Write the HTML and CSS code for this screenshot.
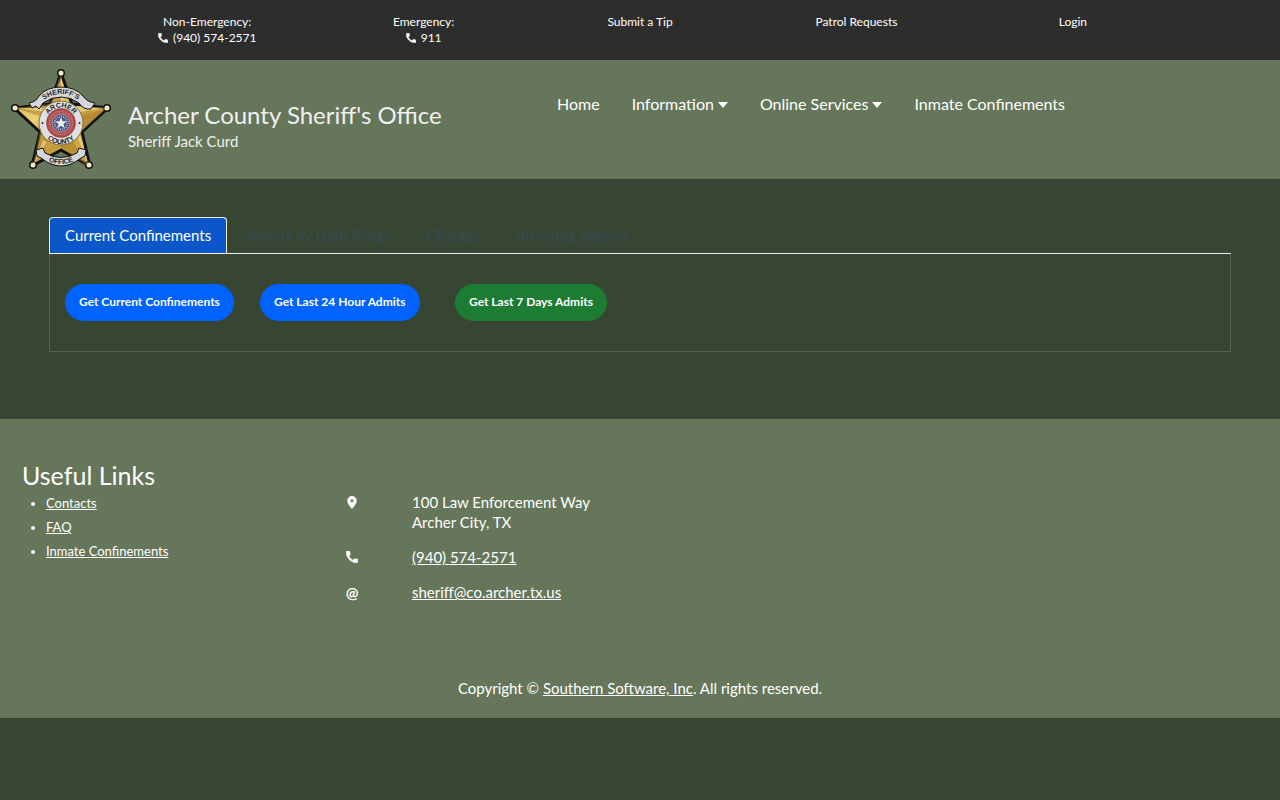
FILE: index.html
```html
<!DOCTYPE html>
<html lang="en">

<head>
    <meta charset="UTF-8">
    <meta name="viewport" content="width=device-width, initial-scale=1.0">
    <title>Archer County Sheriff's Office</title>
    <link rel="stylesheet" href="styles.css">
</head>

<body>
    <svg class="sprite" width="0" height="0" aria-hidden="true">
        <symbol id="icon-phone" viewBox="3 3 18 18">
            <path stroke="currentColor" stroke-width="1" d="M7 10.500c1.440 2.830 3.660 5.040 6.500 6.500l2.200-2.200c.27-.27.67-.36 1.020-.24 1 .37 2.100.57 3.280.57.3 0 .5.25.5.6V19.500c0 .55-.45 1-1 1C10.610 20.500 3.500 13.390 3.500 4.500c0-.55.45-1 1-1h3.500c.55 0 .9.3.9.8 0 1 .2 2.150.57 3.270.11.350.03.74-.25 1.020z" />
        </symbol>
        <symbol id="icon-pin" viewBox="0 0 10 13">
            <path fill-rule="evenodd" d="M5 0a4.700 4.700 0 0 1 4.700 4.700C9.700 7.500 7 10.500 5 13 3 10.500.3 7.500.3 4.700A4.700 4.700 0 0 1 5 0zm0 3.200a1.500 1.500 0 1 0 0 3 1.500 1.500 0 0 0 0-3z" />
        </symbol>
    </svg>

    <div class="topbar">
        <div class="topbar-item">
            Non-Emergency:
            <a href="tel:9405742571"><svg class="icon-small"><use href="#icon-phone" /></svg> (940) 574-2571</a>
        </div>
        <div class="topbar-item">
            Emergency:
            <a href="tel:911"><svg class="icon-small"><use href="#icon-phone" /></svg> 911</a>
        </div>
        <div class="topbar-item"><a href="#">Submit a Tip</a></div>
        <div class="topbar-item"><a href="#">Patrol Requests</a></div>
        <div class="topbar-item"><a href="#">Login</a></div>
    </div>

    <header class="header">
        <a class="brand" href="#">
            <svg class="badge" viewBox="10 8 104 104" role="img" aria-label="Sheriff badge">
                <defs>
                    <linearGradient id="gold" x1="0" y1="0" x2="1" y2="1">
                        <stop offset="0" stop-color="#c9a040" />
                        <stop offset=".35" stop-color="#ecd070" />
                        <stop offset=".6" stop-color="#c59a3c" />
                        <stop offset="1" stop-color="#e3c05a" />
                    </linearGradient>
                    <path id="arc-sheriff" d="M40 44A27 27 0 0 1 82 44" />
                    <path id="arc-archer" d="M45.500 63A15.500 15.500 0 0 1 76.500 63" />
                    <path id="arc-county" d="M40 63A21 21 0 0 0 82 63" />
                    <path id="arc-office" d="M44 99Q61 109 78 99" />
                </defs>
                <!-- star -->
                <g stroke="#111" stroke-width="3" stroke-linejoin="round">
                    <path fill="url(#gold)" d="M61 13 72 44 108 48 82 72 90 106 61 90 32 106 40 72 14 48 50 44z" />
                    <circle cx="61" cy="13" r="2.500" />
                    <circle cx="15" cy="48" r="2.500" />
                    <circle cx="107" cy="48" r="2.500" />
                    <circle cx="33" cy="105" r="2.500" />
                    <circle cx="89" cy="105" r="2.500" />
                </g>
                <path fill="#a87c2c" opacity=".55" d="M61 14 61 63 50 44zM107 48 61 63 82 71zM89 106 61 63 61 88zM33 106 61 63 40 71zM15 48 61 63 50 44z" />
                <path fill="#f7e3a0" opacity=".6" d="M61 14 64 44 61 50zM107 48 80 52 75 46zM15 48 43 48 46 52zM33 106 43 80 47 82zM89 106 78 78 80 74z" />
                <g fill="#f3ead0">
                    <circle cx="61" cy="13" r="2.500" />
                    <circle cx="15" cy="48" r="2.500" />
                    <circle cx="107" cy="48" r="2.500" />
                    <circle cx="33" cy="105" r="2.500" />
                    <circle cx="89" cy="105" r="2.500" />
                </g>
                <!-- ribbons -->
                <g stroke="#111" stroke-width="1">
                    <path fill="#d5d6da" d="M29 43Q36 42 39 36Q47 27 61 27Q75 27 83 36Q87 42 95 43L91 49Q83 50 79 43Q71 37 61 37Q51 37 43 43L39 49 36 46 32 48z" />
                    <path fill="#d5d6da" d="M36 90 43 88 45 93Q61 102 77 93L79 88 86 90 85 96 81 98Q61 114 41 98L37 96z" />
                </g>
                <!-- seal -->
                <circle cx="61" cy="63" r="22" fill="#dedfe2" stroke="#8a6a2c" />
                <circle cx="61" cy="63" r="14.500" fill="#b04a4a" stroke="#7c2626" stroke-width=".5" />
                <circle cx="61" cy="63" r="11.500" fill="none" stroke="#c98580" stroke-width="1.500" stroke-dasharray="1 1" />
                <circle cx="61" cy="63" r="9" fill="#4a5480" stroke="#ddd" stroke-width=".5" />
                <circle cx="61" cy="63" r="6.500" fill="none" stroke="#a8b0c8" stroke-width="2" stroke-dasharray="1 1" />
                <path fill="#eee" d="m61 57 1.500 4.200 4.500.1-3.600 2.700 1.300 4.300L61 65.700l-3.700 2.600 1.300-4.300L55 61.300l4.500-.1z" />
                <circle cx="42.500" cy="63" r="1" fill="#222" />
                <circle cx="79.500" cy="63" r="1" fill="#222" />
                <g class="badge-text">
                    <text><textPath href="#arc-sheriff" startOffset="50%">SHERIFF'S</textPath></text>
                    <text><textPath href="#arc-archer" startOffset="50%">ARCHER</textPath></text>
                    <text><textPath href="#arc-county" startOffset="50%">COUNTY</textPath></text>
                    <text><textPath href="#arc-office" startOffset="50%">OFFICE</textPath></text>
                </g>
            </svg>
            <span class="brand-text">
                <span class="brand-title">Archer County Sheriff's Office</span>
                <span class="brand-subtitle">Sheriff Jack Curd</span>
            </span>
        </a>
        <nav class="nav">
            <a href="#">Home</a>
            <a href="#" class="dropdown">Information</a>
            <a href="#" class="dropdown">Online Services</a>
            <a href="#">Inmate Confinements</a>
        </nav>
    </header>

    <main class="main">
        <div class="tabs" role="tablist">
            <button class="tab active" role="tab" aria-selected="true">Current Confinements</button>
            <button class="tab" role="tab">Admits by Date Range</button>
            <button class="tab" role="tab">Charges</button>
            <button class="tab" role="tab">Arresting Agency</button>
        </div>
        <div class="tab-panel" role="tabpanel">
            <button class="btn">Get Current Confinements</button>
            <button class="btn">Get Last 24 Hour Admits</button>
            <button class="btn btn-success">Get Last 7 Days Admits</button>
        </div>
    </main>

    <footer class="footer">
        <div class="footer-row">
            <div class="links">
                <h2>Useful Links</h2>
                <ul>
                    <li><a href="#">Contacts</a></li>
                    <li><a href="#">FAQ</a></li>
                    <li><a href="#">Inmate Confinements</a></li>
                </ul>
            </div>
            <address class="contact">
                <svg class="icon-pin"><use href="#icon-pin" /></svg>
                <div>100 Law Enforcement Way<br>Archer City, TX</div>
                <svg class="icon-phone"><use href="#icon-phone" /></svg>
                <a href="tel:9405742571">(940) 574-2571</a>
                <span>@</span>
                <a href="mailto:sheriff@co.archer.tx.us">sheriff@co.archer.tx.us</a>
            </address>
        </div>
        <p class="copyright">Copyright © <a href="#">Southern Software, Inc</a>. All rights reserved.</p>
    </footer>
</body>

</html>
```
FILE: styles.css
```css
* {
    box-sizing: border-box;
}

body {
    margin: 0;
    background-color: #374533;
    color: white;
    font-family: Lato, "Open Sans", sans-serif;
    font-size: 15px;
    line-height: 20px;
}

a {
    color: white;
}

button {
    font-family: inherit;
    cursor: pointer;
}

svg {
    fill: currentColor;
}

.sprite {
    position: absolute;
}

.topbar {
    display: flex;
    min-height: 60px;
    padding: 14px 99px 0;
    background-color: #2d2d2d;
    font-size: 12px;
    line-height: 16px;
    text-align: center;
}

.topbar-item {
    flex: 1;
}

.topbar-item a {
    display: block;
    text-decoration: none;
}

.icon-small {
    width: 10px;
    height: 10px;
    margin-right: 2px;
    vertical-align: -1px;
}

.header {
    display: flex;
    min-height: 119px;
    padding: 8px 10px 7px;
    background-color: #65765a;
}

.brand {
    display: flex;
    flex: 0 0 531px;
    gap: 14px;
    color: #f0f0f0;
    text-decoration: none;
}

.badge {
    width: 104px;
    height: 104px;
}

.badge-text {
    fill: #222;
    font-family: "Liberation Sans", sans-serif;
    font-size: 7px;
    font-weight: bold;
    text-anchor: middle;
}

.brand-text {
    padding-top: 31px;
}

.brand-title,
.brand-subtitle {
    display: block;
}

.brand-title {
    font-size: 24px;
    line-height: 32px;
}

.nav {
    display: flex;
    gap: 32px;
    margin-left: 16px;
    padding-top: 26px;
    font-size: 16px;
}

.nav a {
    text-decoration: none;
    white-space: nowrap;
}

.dropdown::after {
    content: "";
    display: inline-block;
    margin-left: 4px;
    border-top: 6px solid white;
    border-left: 5px solid transparent;
    border-right: 5px solid transparent;
    vertical-align: 2px;
}

.main {
    padding: 38px 49px 67px;
}

.tabs {
    display: flex;
    gap: 3px;
    border-bottom: 1px solid #f0f0f0;
}

.tab {
    height: 36px;
    padding: 0 15px 2px;
    border: 1px solid transparent;
    border-bottom: none;
    border-radius: 4px 4px 0 0;
    background: none;
    color: #3a4a52;
    font-size: 15px;
}

.tab.active {
    border-color: #f0f0f0;
    background-color: #0b57ca;
    color: white;
}

.tab-panel {
    display: grid;
    grid-template-columns: repeat(auto-fill, 195px);
    justify-items: start;
    padding: 30px 15px;
    border: 1px solid #55654e;
    border-top: none;
}

.btn {
    height: 37px;
    padding: 0 14px 2px;
    border: none;
    border-radius: 20px;
    background-color: #0062ff;
    color: white;
    font-size: 12px;
    font-weight: bold;
}

.btn-success {
    background-color: #1c7c34;
}

.footer {
    padding: 40px 22px 20px;
    background-color: #65765a;
}

.footer-row {
    display: flex;
    min-height: 219px;
}

.links {
    flex: 0 0 318px;
}

.links h2 {
    margin: 0;
    font-size: 25px;
    font-weight: normal;
    line-height: 32px;
}

.links ul {
    margin: 0;
    padding-left: 24px;
    font-size: 13px;
    line-height: 24px;
}

.contact {
    display: grid;
    grid-template-columns: 24px auto;
    align-content: start;
    gap: 15px 48px;
    padding-top: 33px;
    font-style: normal;
}

.contact svg,
.contact span {
    justify-self: center;
}

.contact span {
    font-weight: bold;
}

.icon-pin {
    width: 10px;
    height: 13px;
    margin-top: 4px;
}

.icon-phone {
    width: 12px;
    height: 12px;
    margin-top: 4px;
}

.copyright {
    margin: 0;
    text-align: center;
}
```
